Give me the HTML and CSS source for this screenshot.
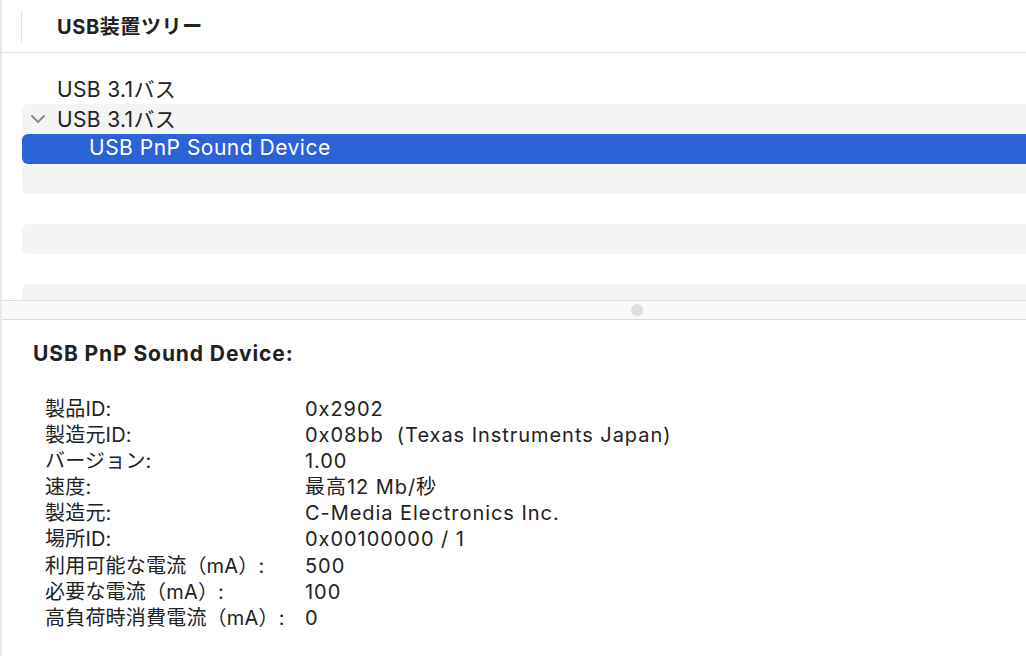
FILE: index.html
```html
<!DOCTYPE html>
<html lang="ja">
<head>
<meta charset="UTF-8" />
<title>USB装置ツリー</title>
<link rel="stylesheet" href="styles.css">
</head>
<body>
  <div class="window">
    <section class="tree-pane">
      <header class="col-header">
        <span class="col-sep"></span>
        <span class="col-title">USB装置ツリー</span>
      </header>
      <ul class="tree">
        <li class="row">USB 3.1バス</li>
        <li class="row striped">
          <svg class="chevron" width="16" height="10" viewBox="0 0 16 10"><path d="M2 2 L8 8 L14 2" fill="none" stroke="#8a8a8a" stroke-width="2" stroke-linecap="round" stroke-linejoin="round"/></svg>USB 3.1バス
        </li>
        <li class="row child selected">USB PnP Sound Device</li>
        <li class="row striped"></li>
        <li class="row"></li>
        <li class="row striped"></li>
        <li class="row"></li>
        <li class="row striped"></li>
      </ul>
    </section>

    <div class="splitter"><span class="grip"></span></div>

    <section class="detail-pane">
      <h2>USB PnP Sound Device:</h2>
      <dl class="props">
        <dt>製品ID:</dt><dd>0x2902</dd>
        <dt>製造元ID:</dt><dd>0x08bb&nbsp; (Texas Instruments Japan)</dd>
        <dt>バージョン:</dt><dd>1.00</dd>
        <dt>速度:</dt><dd>最高12 Mb/秒</dd>
        <dt>製造元:</dt><dd>C-Media Electronics Inc.</dd>
        <dt>場所ID:</dt><dd>0x00100000 / 1</dd>
        <dt>利用可能な電流（mA）:</dt><dd>500</dd>
        <dt>必要な電流（mA）:</dt><dd>100</dd>
        <dt>高負荷時消費電流（mA）:</dt><dd>0</dd>
      </dl>
    </section>
  </div>
</body>
</html>
```
FILE: styles.css
```css
body {
  margin: 0;
  background: #fff;
  color: #222;
  font-family: "Inter", "Noto Sans CJK JP", sans-serif;
  overflow: hidden;
}
.window {
  border-left: 2px solid #e8e8e8;
  height: 656px;
}
.tree-pane {
  height: 300px;
  overflow: hidden;
}
.col-header {
  display: flex;
  align-items: center;
  height: 50px;
  padding-bottom: 2px;
  border-bottom: 1px solid #e2e2e2;
}
.col-sep {
  width: 1px;
  height: 32px;
  margin-top: 2px;
  margin-left: 19px;
  background: #e0e0e0;
}
.col-title {
  margin-left: 35px;
  font-size: 20px;
  font-weight: 700;
  letter-spacing: 0.6px;
}
.tree {
  list-style: none;
  margin: 0;
  padding: 21px 0 0 20px;
}
.row {
  box-sizing: border-box;
  display: flex;
  align-items: center;
  height: 30px;
  padding: 0 0 3px 35px;
  font-size: 21px;
  letter-spacing: 0.35px;
  border-radius: 6px 0 0 6px;
}
.row.striped {
  background: #f3f4f4;
}
.row .chevron {
  margin: 3px 11px 0 -27px;
}
.row.child {
  padding-left: 67px;
  letter-spacing: 0.5px;
}
.row.selected {
  background: #2a62d8;
  color: #fff;
}
.splitter {
  display: flex;
  align-items: center;
  height: 18px;
  border-top: 1px solid #dcdcdc;
  border-bottom: 1px solid #dcdcdc;
  background: #f9f9f9;
}
.grip {
  width: 12px;
  height: 12px;
  margin-left: 629px;
  border-radius: 50%;
  background: #dedede;
}
.detail-pane {
  padding: 22px 0 0 31px;
}
.detail-pane h2 {
  margin: 0 0 30px;
  font-size: 21px;
  line-height: 24px;
  font-weight: 700;
  letter-spacing: 0.9px;
}
.props {
  display: grid;
  grid-template-columns: 260px auto;
  margin: 0 0 0 12px;
  font-size: 20px;
  line-height: 26.1px;
  letter-spacing: 0.95px;
}
.props dt {
  letter-spacing: 0.2px;
}
.props dt, .props dd {
  margin: 0;
}
```
